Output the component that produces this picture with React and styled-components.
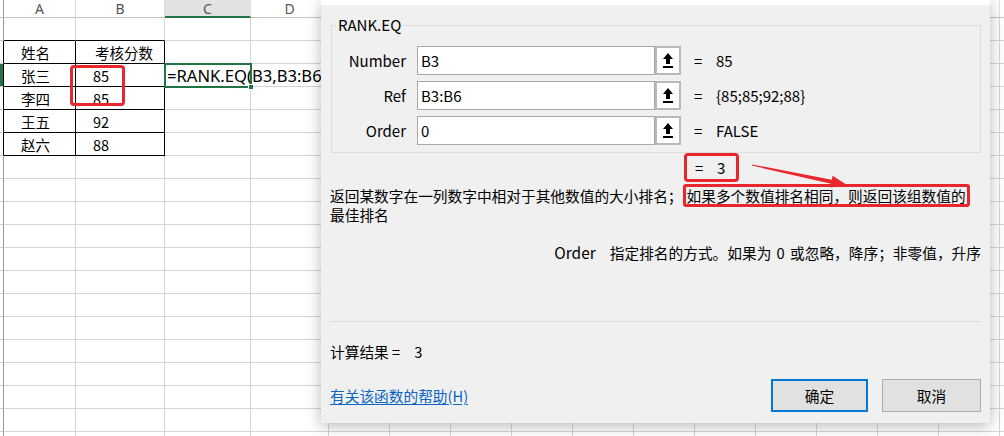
import React from 'react';
import styled, { createGlobalStyle } from 'styled-components';

const GlobalStyle = createGlobalStyle`
  *, *::before, *::after { box-sizing: border-box; }
  body {
    margin: 0;
    background: #fff;
    font-family: "Noto Sans CJK SC", "Noto Sans", sans-serif;
    color: #000;
  }
`;

const Page = styled.div`
  position: relative;
  width: 1004px;
  height: 436px;
  overflow: hidden;
  background: #fff;
`;

/* ---------- spreadsheet ---------- */

const Sheet = styled.div`
  display: grid;
  grid-template-columns: 4px 72px 89px 86px 78px repeat(12, 61px);
  grid-template-rows: 18px;
  grid-auto-rows: 23px;
`;

const HeadCell = styled.div`
  display: flex;
  align-items: center;
  justify-content: center;
  font-family: "Noto Sans", sans-serif;
  font-size: 14px;
  color: #555;
  background: ${p => (p.$current ? '#e2e2e2' : '#fff')};
  border-right: 1px solid ${p => (p.$corner ? '#9a9a9a' : '#e0e0e0')};
  border-bottom: ${p => (p.$current ? '2px solid #217346' : '1px solid #c4c4c4')};
`;

const Stub = styled.div`
  background: ${p => (p.$active ? '#217346' : '#fff')};
  border-right: 1px solid ${p => (p.$edge ? '#000' : '#9a9a9a')};
  border-bottom: 1px solid #c4c4c4;
`;

const Cell = styled.div`
  position: relative;
  display: flex;
  align-items: center;
  padding-left: ${p => p.$pad || 0}px;
  font-size: 14.5px;
  white-space: nowrap;
  border-right: 1px solid ${p => (p.$edgeRight ? '#000' : '#d4d4d4')};
  border-bottom: 1px solid ${p => (p.$edgeBottom ? '#000' : '#d4d4d4')};
  ${p =>
    p.$selected &&
    `
    z-index: 1;
    outline: 2px solid #217346;
    outline-offset: -1px;
    &::after {
      content: '';
      position: absolute;
      right: -4px;
      bottom: -4px;
      width: 6px;
      height: 6px;
      background: #217346;
      border: 1px solid #fff;
    }
  `}
`;

const Formula = styled.span`
  font-family: "Noto Sans", sans-serif;
  font-size: 16.6px;
  padding-left: 2px;
`;

const RedMark = styled.div`
  position: absolute;
  left: 70px;
  top: 65px;
  width: 55px;
  height: 41px;
  border: 3px solid #e8262b;
  border-radius: 4px;
  pointer-events: none;
`;

const Arrow = styled.svg`
  position: absolute;
  left: 0;
  top: 0;
  z-index: 3;
  pointer-events: none;
`;

/* ---------- dialog ---------- */

const Dialog = styled.div`
  position: absolute;
  left: 321px;
  top: 0;
  width: 669px;
  height: 423px;
  z-index: 2;
  background: #f0f0f0;
  box-shadow: 0 3px 14px rgba(0, 0, 0, 0.28);
  display: flex;
  flex-direction: column;
  font-size: 14.7px;
`;

const TitleStrip = styled.div`
  height: 5px;
  background: #fff;
`;

const Body = styled.div`
  flex: 1;
  display: flex;
  flex-direction: column;
  padding: 0 9px;
`;

const Group = styled.fieldset`
  margin: 10px 0 0 1px;
  padding: 11px 0 7px;
  border: 1px solid #dcdcdc;
  min-inline-size: 0;
`;

const Legend = styled.legend`
  margin-left: 4px;
  padding: 0 2px;
  font-size: 15px;
  line-height: 20px;
`;

const ArgRow = styled.div`
  display: flex;
  align-items: center;
  height: 29px;
  & + & { margin-top: 6px; }
`;

const ArgLabel = styled.div`
  width: 74px;
  margin-right: 11px;
  text-align: right;
  font-size: 15px;
`;

const Field = styled.div`
  width: 238px;
  height: 29px;
  display: flex;
  align-items: center;
  padding-left: 3px;
  background: #fff;
  border: 1px solid #a8a8a8;
  font-size: 15px;
`;

const PickButton = styled.div`
  width: 26px;
  height: 29px;
  display: flex;
  align-items: center;
  justify-content: center;
  background: #fff;
  border: 2px solid #b9b9b9;
`;

const ArgValue = styled.div`
  margin-left: 13px;
  display: flex;
  font-size: 15px;
`;

const Eq = styled.span`
  display: inline-block;
  width: 22px;
`;

const ResultMark = styled.div`
  align-self: flex-start;
  margin-left: 354px;
  height: 29px;
  display: flex;
  align-items: center;
  padding: 0 11px 0 8px;
  border: 3px solid #e8262b;
  border-radius: 4px;
  font-size: 15px;
`;

const Description = styled.p`
  margin: 4px 0 0;
  line-height: 19px;
`;

const Highlight = styled.span`
  display: inline-block;
  line-height: 17px;
  margin: -2px 0;
  padding: 0 1px;
  border: 3px solid #e8262b;
  border-radius: 3px;
`;

const OrderHint = styled.p`
  margin: 19px 0 0;
  line-height: 19px;
  text-align: right;
  word-spacing: 2px;
`;

const ArgName = styled.span`
  margin-right: 14px;
  font-size: 15.5px;
`;

const Divider = styled.div`
  margin-top: 59px;
  height: 1px;
  background: #dadada;
`;

const CalcResult = styled.div`
  margin-top: 20px;
  line-height: 20px;
`;

const CalcValue = styled.span`
  margin-left: 14px;
`;

const Footer = styled.div`
  margin-top: 17px;
  display: flex;
  align-items: center;
  gap: 14px;
  height: 33px;
`;

const HelpLink = styled.a`
  flex: 1;
  color: #0b63c4;
  text-decoration: underline;
  text-underline-offset: 2px;
  cursor: pointer;
`;

const Button = styled.button`
  width: ${p => (p.$primary ? 97 : 99)}px;
  height: 33px;
  font-family: inherit;
  font-size: 14.7px;
  color: #000;
  background: #e1e1e1;
  border: ${p => (p.$primary ? '2px solid #0078d7' : '1px solid #adadad')};
  padding: 0;
`;

const UpIcon = () => (
  <svg width="12" height="17" viewBox="0 0 12 17">
    <polygon points="6,1 11,7 8,7 8,12 4,12 4,7 1,7" fill="#000" />
    <rect x="1" y="14" width="10" height="2" fill="#000" />
  </svg>
);

const columns = ['A', 'B', 'C', 'D', 'E', 'F', 'G', 'H', 'I', 'J', 'K', 'L', 'M', 'N', 'O', 'P'];

const table = {
  2: ['姓名', '考核分数'],
  3: ['张三', '85'],
  4: ['李四', '85'],
  5: ['王五', '92'],
  6: ['赵六', '88'],
};

const args = [
  { name: 'Number', value: 'B3', result: '85' },
  { name: 'Ref', value: 'B3:B6', result: '{85;85;92;88}' },
  { name: 'Order', value: '0', result: 'FALSE' },
];

const renderRow = r => {
  const inTable = r >= 2 && r <= 6;
  const cells = [<Stub key="s" $edge={inTable} $active={r === 3} />];
  columns.forEach((col, i) => {
    const c = i + 1;
    const tableCol = c <= 2;
    const text = inTable && tableCol ? table[r][c - 1] : null;
    const selected = r === 3 && c === 3;
    cells.push(
      <Cell
        key={col}
        $pad={c === 2 && r === 2 ? 19 : tableCol ? 17 : 0}
        $edgeRight={inTable && tableCol}
        $edgeBottom={(inTable || r === 1) && tableCol}
        $selected={selected}
      >
        {text}
        {selected && <Formula>=RANK.EQ(B3,B3:B6,0)</Formula>}
      </Cell>
    );
  });
  return cells;
};

export default function App() {
  const rows = Array.from({ length: 19 }, (_, i) => i + 1);
  return (
    <Page>
      <GlobalStyle />
      <Sheet>
        <HeadCell $corner />
        {columns.map(col => (
          <HeadCell key={col} $current={col === 'C'}>{col}</HeadCell>
        ))}
        {rows.map(r => renderRow(r))}
      </Sheet>
      <RedMark />

      <Dialog>
        <TitleStrip />
        <Body>
          <Group>
            <Legend>RANK.EQ</Legend>
            {args.map(a => (
              <ArgRow key={a.name}>
                <ArgLabel>{a.name}</ArgLabel>
                <Field>{a.value}</Field>
                <PickButton><UpIcon /></PickButton>
                <ArgValue><Eq>=</Eq>{a.result}</ArgValue>
              </ArgRow>
            ))}
          </Group>
          <ResultMark><Eq>=</Eq>3</ResultMark>
          <Description>
            返回某数字在一列数字中相对于其他数值的大小排名；<Highlight>如果多个数值排名相同，则返回该组数值的</Highlight>最佳排名
          </Description>
          <OrderHint>
            <ArgName>Order</ArgName>指定排名的方式。如果为 0 或忽略，降序；非零值，升序
          </OrderHint>
          <Divider />
          <CalcResult>计算结果 =<CalcValue>3</CalcValue></CalcResult>
          <Footer>
            <HelpLink>有关该函数的帮助(H)</HelpLink>
            <Button $primary>确定</Button>
            <Button>取消</Button>
          </Footer>
        </Body>
      </Dialog>

      <Arrow width="1004" height="436" viewBox="0 0 1004 436">
        <polygon
          points="752,164.4 831.8,179.7 832.6,175.8 847,185 830.2,187.6 831,183.7 752,165.6"
          fill="#e8262b"
        />
      </Arrow>
    </Page>
  );
}
